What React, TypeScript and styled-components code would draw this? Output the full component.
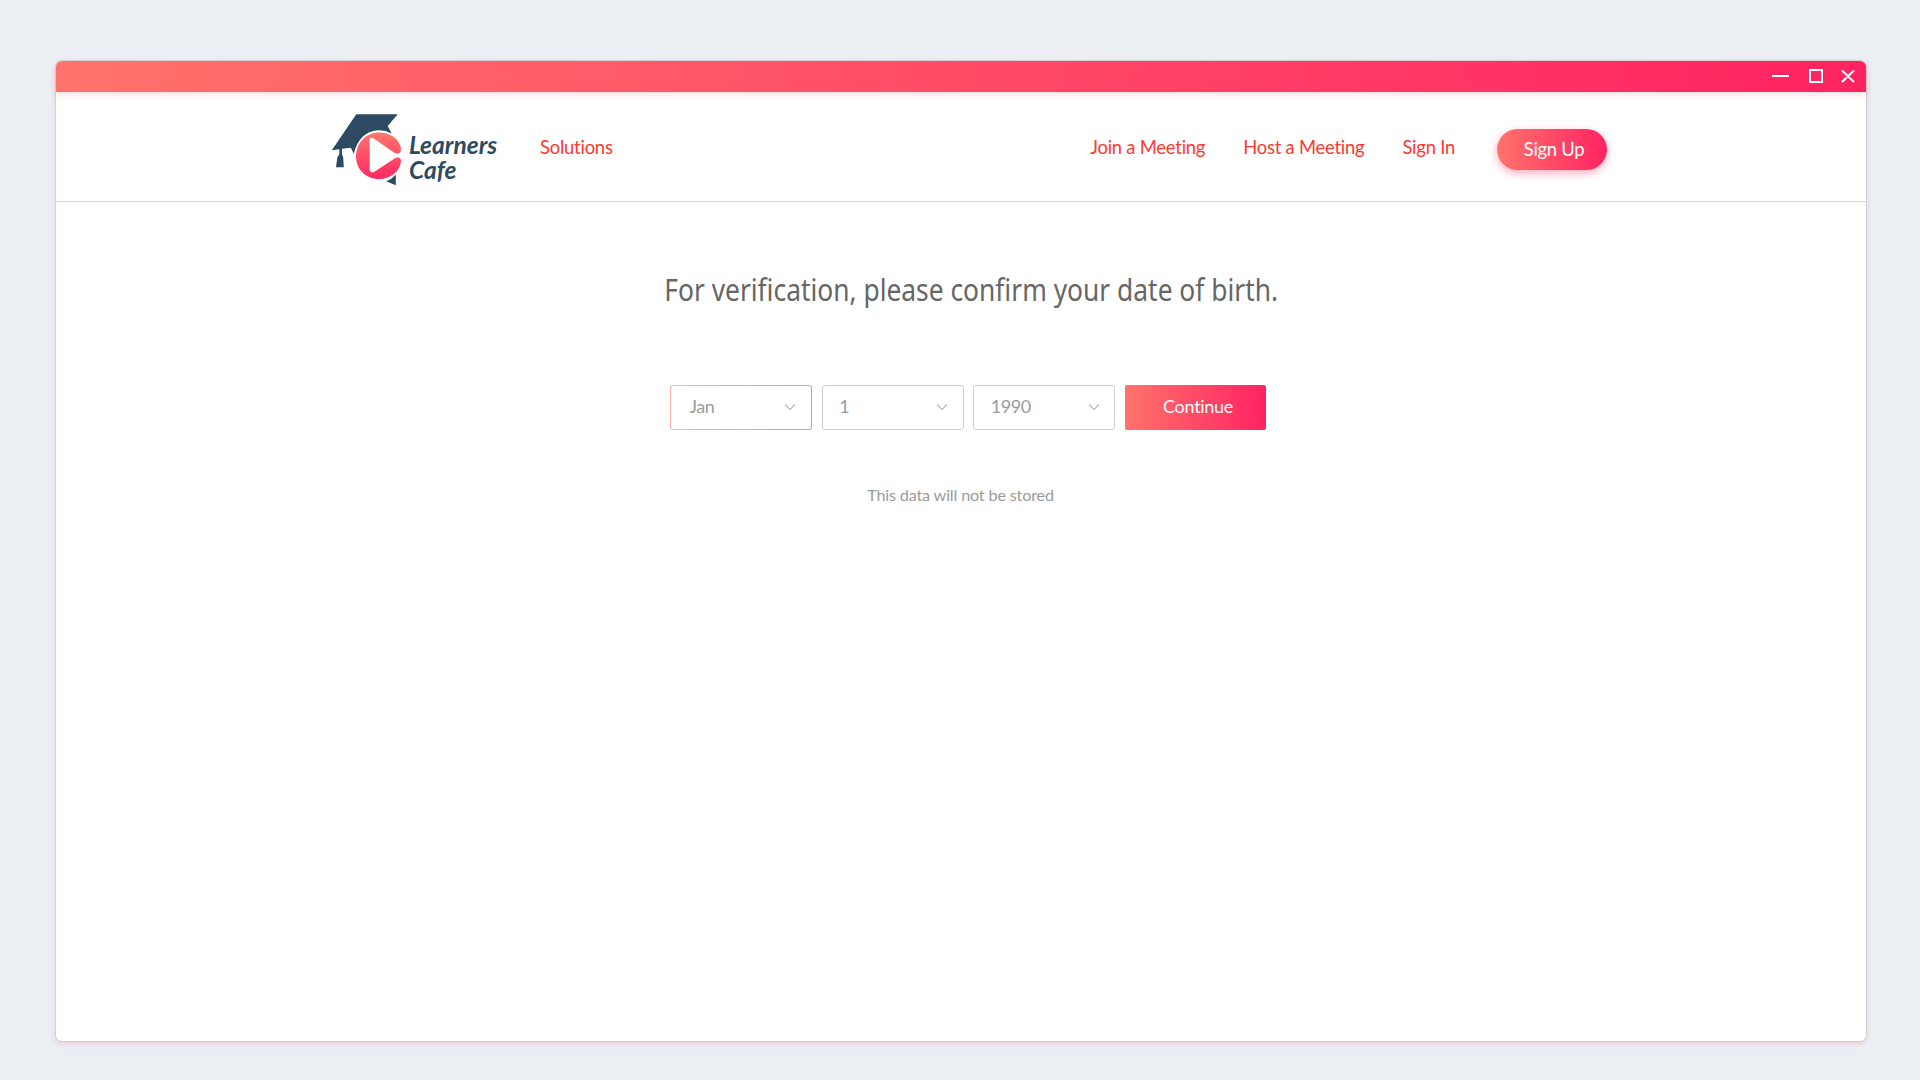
import React from 'react';
import styled, { createGlobalStyle } from 'styled-components';

const GlobalStyle = createGlobalStyle`
  * { box-sizing: border-box; }
  body { margin: 0; background: #ebeff4; font-family: Lato, "Open Sans", sans-serif; font-variant-ligatures: none; }
  button { font-family: inherit; font-variant-ligatures: none; border: 0; padding: 0; cursor: pointer; }
`;

const gradient = 'linear-gradient(90deg, #ff736b 0%, #ff2362 100%)';

const Page = styled.div`
  height: 1081px;
  padding: 61px 54px 0 56px;
  border-bottom: 1px solid #fff;
  overflow: hidden;
`;
const Window = styled.main`
  height: 980px;
  border-radius: 6px;
  background: #fff;
  box-shadow: 0 0 0 1px rgba(200, 196, 202, 0.6), 0 3px 6px rgba(255, 60, 90, 0.2);
`;
const TitleBar = styled.div`
  height: 31px;
  display: flex;
  justify-content: flex-end;
  border-radius: 6px 6px 0 0;
  background: ${gradient};
  box-shadow: 0 3px 6px rgba(255, 60, 80, 0.16);
`;
const Header = styled.header`
  height: 110px;
  display: flex;
  align-items: flex-start;
  border-bottom: 1px solid #d2d2d2;
  padding: 20px 259px 0 275px;
`;
const Brand = styled.div`
  display: flex;
  width: 209px;
`;
const BrandName = styled.div`
  display: flex;
  flex-direction: column;
  margin: 20px 0 0 5px;
  color: #2c4a62;
  font: italic 700 24.5px/25px Lato, sans-serif;
`;
const NavLink = styled.a<{ $gap?: number }>`
  margin-top: 23px;
  margin-right: ${(p) => p.$gap ?? 0}px;
  color: #ff372e;
  font-size: 18.4px;
  letter-spacing: -0.22px;
  line-height: 24px;
  white-space: nowrap;
`;
const Nav = styled.nav`
  display: flex;
  margin-left: auto;
`;
const SignUp = styled.button`
  width: 110px;
  height: 41px;
  margin-top: 17px;
  padding: 0 0 1px 4px;
  border-radius: 21px;
  background: ${gradient};
  color: #fff;
  font-size: 18.4px;
  letter-spacing: -0.3px;
  box-shadow: 0 3px 8px rgba(255, 45, 95, 0.42);
`;
const Content = styled.section`
  display: flex;
  flex-direction: column;
  align-items: center;
  padding-top: 65px;
`;
const Heading = styled.h1`
  margin: 0 0 0 21px;
  color: #666;
  font: 400 30px/46px "Noto Sans", sans-serif;
  font-variant-ligatures: normal;
  white-space: nowrap;
  transform: scaleX(0.879);
`;
const Form = styled.form`
  display: flex;
  gap: 9.7px;
  margin: 72px 0 0 14px;
`;
const Select = styled.button<{ $active?: boolean }>`
  width: 142px;
  height: 45px;
  display: flex;
  align-items: center;
  justify-content: space-between;
  padding: 0 13.5px 3px ${(p) => (p.$active ? 18.5 : 16.5)}px;
  border: 1px solid ${(p) => (p.$active ? 'transparent' : '#cfcfcf')};
  border-radius: 3px;
  background: ${(p) =>
    p.$active
      ? 'linear-gradient(#fff, #fff) padding-box, linear-gradient(90deg, #ffb2ae, #ff86ad) border-box'
      : '#fff'};
  color: #9b9b9b;
  font-size: 18px;
  letter-spacing: -0.5px;
`;
const Continue = styled.button`
  width: 141px;
  height: 45px;
  padding: 0 0 3px 5px;
  border-radius: 2px;
  background: ${gradient};
  color: #fff;
  font-size: 18px;
  letter-spacing: -0.3px;
`;
const Note = styled.p`
  margin: 54px 1px 0 0;
  color: #9b9b9b;
  font-size: 16.2px;
  line-height: 22px;
  letter-spacing: -0.17px;
`;

const WindowControls = () => (
  <svg width="96" height="31" viewBox="0 0 96 31" fill="none" stroke="#fff" strokeWidth="2">
    <path d="M2 15h17M40 9h12v12H40zM72 9.5 84 21M84 9.5 72 21" />
  </svg>
);

const Logo = () => (
  <svg width="73" height="76" viewBox="331 112 73 76">
    <defs>
      <linearGradient id="play" x1="0" y1="0" x2="0" y2="1">
        <stop offset="0" stopColor="#ff766d" />
        <stop offset="1" stopColor="#ff2862" />
      </linearGradient>
    </defs>
    <path
      fill="#2c4a62"
      d="M356.3 114.2H397.7L387.7 126 391.7 133.5Q385 130 378 130.3 359 132 353.8 153.8L350.8 147.8 342 148.8V154L343.2 157.5 343.8 167.3H336L337.3 157.5 339.3 154V149.2L331.8 150.3Z"
    />
    <path fill="#2c4a62" d="M386.2 181.2Q391.5 179.5 395.8 174.7V185.2Z" />
    <path
      fill="url(#play)"
      d="M371 134C375.8 131.8 386 131.6 393 136.5 398 140 401 145.5 401 149.5 401 153.5 397.5 154.5 394 152.5L373.5 138.3Q371.8 137 369.7 138.3V170.2Q370.8 174 374.8 171.5L394.5 158.5C397.5 156.5 401.5 157.5 401 161.5 400 171 391 179 379 179 366 179 356 169.3 356 156.5 356 146 362 137 371 134Z"
    />
  </svg>
);

const Chevron = () => (
  <svg width="14" height="10" viewBox="0 0 14 10" fill="none" stroke="#b9b9b9" strokeWidth="1.2">
    <path d="m2 3.5 5 5 5-5" />
  </svg>
);

export default function App() {
  return (
    <Page>
      <GlobalStyle />
      <Window>
        <TitleBar>
          <WindowControls />
        </TitleBar>
        <Header>
          <Brand>
            <Logo />
            <BrandName>
              <span>Learners</span>
              <span>Cafe</span>
            </BrandName>
          </Brand>
          <NavLink>Solutions</NavLink>
          <Nav>
            <NavLink $gap={38}>Join a Meeting</NavLink>
            <NavLink $gap={38}>Host a Meeting</NavLink>
            <NavLink $gap={42}>Sign In</NavLink>
            <SignUp>Sign Up</SignUp>
          </Nav>
        </Header>
        <Content>
          <Heading>For verification, please confirm your date of birth.</Heading>
          <Form onSubmit={(e) => e.preventDefault()}>
            <Select type="button" $active>
              Jan
              <Chevron />
            </Select>
            <Select type="button">
              1
              <Chevron />
            </Select>
            <Select type="button">
              1990
              <Chevron />
            </Select>
            <Continue>Continue</Continue>
          </Form>
          <Note>This data will not be stored</Note>
        </Content>
      </Window>
    </Page>
  );
}
